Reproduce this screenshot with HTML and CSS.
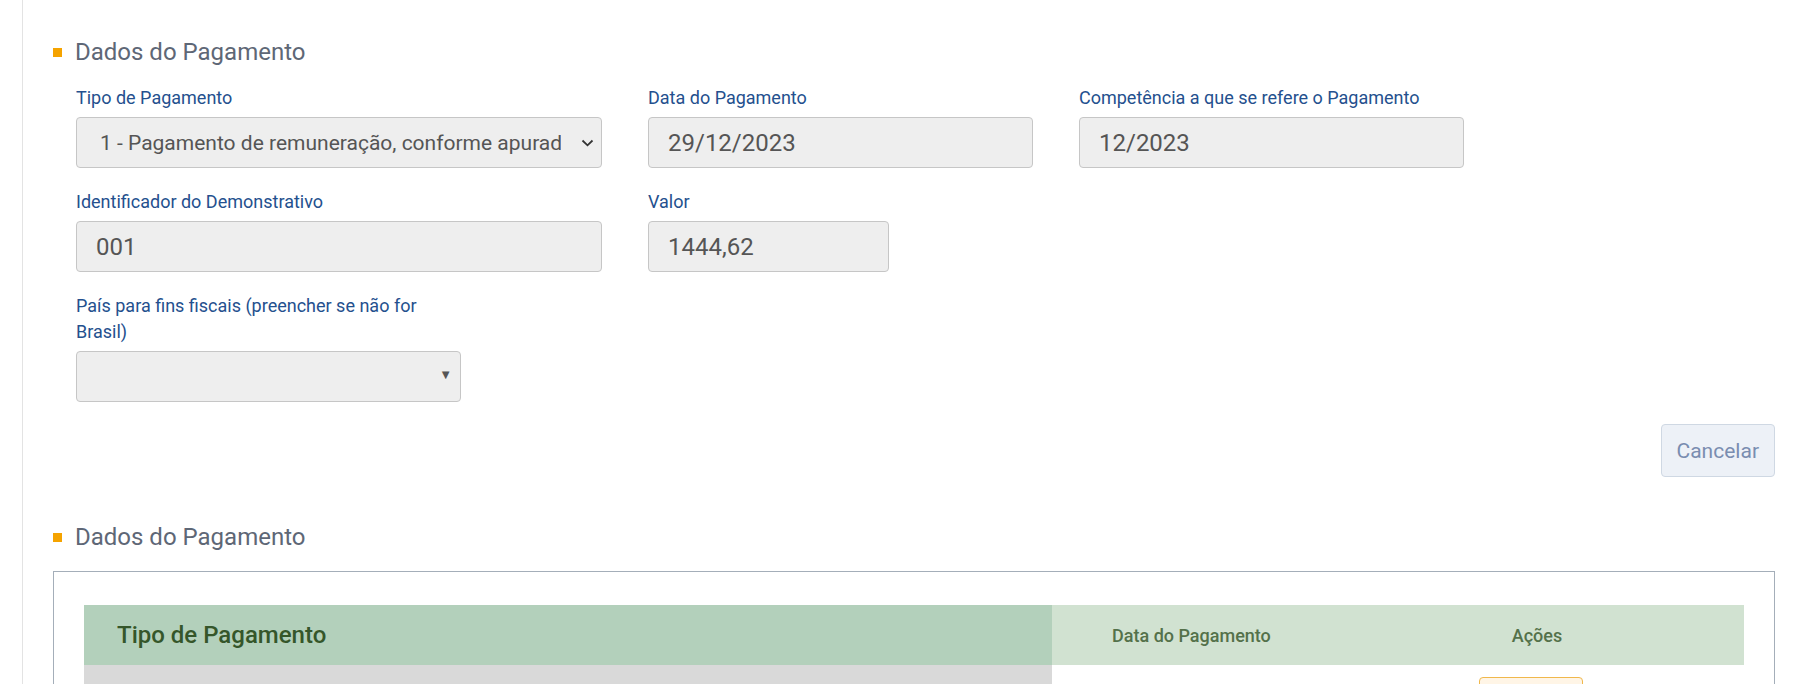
FILE: index.html
```html
<!DOCTYPE html>
<html lang="pt-BR">
<head>
    <meta charset="UTF-8">
    <meta name="viewport" content="width=device-width, initial-scale=1.0">
    <title>Dados do Pagamento</title>
    <link rel="stylesheet" href="styles.css">
</head>
<body>

    <div class="painel">
        <section class="secao">
            <h3 class="secao-titulo">Dados do Pagamento</h3>

            <div class="form-grid">
                <div class="campo campo-largo">
                    <label>Tipo de Pagamento</label>
                    <div class="select-wrap">
                        <select class="entrada" disabled>
                            <option>1 - Pagamento de remuneração, conforme apurado no demonstrativo</option>
                        </select>
                        <svg class="seta-chevron" width="13" height="8" viewBox="0 0 13 8">
                            <path d="M1.5 1.5 L6.5 6.3 L11.5 1.5" fill="none" stroke="#333" stroke-width="1.8"/>
                        </svg>
                    </div>
                </div>

                <div class="campo">
                    <label>Data do Pagamento</label>
                    <input class="entrada" type="text" value="29/12/2023" disabled>
                </div>

                <div class="campo">
                    <label>Competência a que se refere o Pagamento</label>
                    <input class="entrada" type="text" value="12/2023" disabled>
                </div>

                <div class="campo campo-largo">
                    <label>Identificador do Demonstrativo</label>
                    <input class="entrada" type="text" value="001" disabled>
                </div>

                <div class="campo campo-curto">
                    <label>Valor</label>
                    <input class="entrada" type="text" value="1444,62" disabled>
                </div>

                <div class="campo campo-pais">
                    <label>País para fins fiscais (preencher se não for Brasil)</label>
                    <div class="select-wrap">
                        <select class="entrada entrada-pais" disabled>
                            <option></option>
                        </select>
                        <span class="seta-triangulo">&#9660;</span>
                    </div>
                </div>
            </div>

            <div class="acoes">
                <button class="btn-cancelar" type="button">Cancelar</button>
            </div>
        </section>

        <section class="secao">
            <h3 class="secao-titulo">Dados do Pagamento</h3>

            <div class="tabela-box">
                <table class="tabela">
                    <thead>
                        <tr>
                            <th class="col-tipo">Tipo de Pagamento</th>
                            <th class="col-data">Data do Pagamento</th>
                            <th class="col-acoes">Ações</th>
                        </tr>
                    </thead>
                    <tbody>
                        <tr>
                            <td class="col-tipo"></td>
                            <td class="col-data"></td>
                            <td class="col-acoes"><button class="btn-editar" type="button">Editar</button></td>
                        </tr>
                    </tbody>
                </table>
            </div>
        </section>
    </div>

</body>
</html>
```

FILE: styles.css
```css
/* Base */
body {
    font-family: 'Roboto', 'Liberation Sans', sans-serif;
    background-color: #ffffff;
    color: #555555;
    margin: 0;
    padding: 0;
    overflow: hidden;
}

.painel {
    margin-left: 22px;
    border-left: 1px solid #e3e3e3;
    padding: 37px 26px 40px 30px;
    min-height: 700px;
}

/* Section titles */
.secao-titulo {
    margin: 0;
    font-size: 24px;
    line-height: 30px;
    font-weight: 400;
    color: #5e6776;
    display: flex;
    align-items: center;
}

.secao-titulo::before {
    content: "";
    width: 9px;
    height: 9px;
    background-color: #f5a300;
    margin-right: 13px;
}

.secao + .secao {
    margin-top: 45px;
}

/* Form */
.form-grid {
    display: grid;
    grid-template-columns: 526px 385px 385px;
    column-gap: 46px;
    row-gap: 21px;
    margin: 18px 0 0 23px;
    align-items: end;
}

.campo {
    display: flex;
    flex-direction: column;
}

.campo-largo {
    grid-column: 1;
}

.campo-curto {
    width: 241px;
}

.campo-pais {
    grid-column: 1;
    width: 385px;
}

.campo label {
    color: #24508e;
    font-size: 18px;
    line-height: 26px;
    margin-bottom: 6px;
}

.entrada {
    box-sizing: border-box;
    height: 51px;
    width: 100%;
    padding: 0 19px;
    border: 1px solid #c6c6c6;
    border-radius: 4px;
    background-color: #eeeeee;
    color: #555555;
    font-family: inherit;
    font-size: 24px;
    opacity: 1;
    outline: none;
}

.select-wrap {
    position: relative;
}

select.entrada {
    appearance: none;
    -webkit-appearance: none;
    padding: 0 40px 0 23px;
    font-size: 21px;
}

.seta-chevron {
    position: absolute;
    right: 8px;
    top: 22px;
}

.seta-triangulo {
    position: absolute;
    right: 9px;
    top: 16px;
    font-size: 13px;
    color: #555555;
}

/* Buttons */
.acoes {
    display: flex;
    justify-content: flex-end;
    margin-top: 22px;
}

.btn-cancelar {
    background-color: #edf1f7;
    color: #7a8db0;
    border: 1px solid #cfd8e3;
    border-radius: 4px;
    height: 53px;
    padding: 0 15px;
    font-family: 'Roboto', sans-serif;
    font-size: 21px;
    cursor: pointer;
}

/* Table */
.tabela-box {
    margin-top: 19px;
    border: 1px solid #a4aeb9;
    padding: 33px 30px 30px 30px;
}

.tabela {
    width: 100%;
    border-collapse: collapse;
    table-layout: fixed;
}

.tabela th {
    height: 60px;
    padding: 0;
    text-align: left;
    font-weight: 500;
    background-color: #d1e2d1;
    color: #54714a;
    font-size: 18px;
    box-sizing: border-box;
}

.tabela .col-tipo {
    width: 968px;
}

.tabela th.col-tipo {
    background-color: #b3d0bb;
    color: #35562a;
    font-size: 24px;
    padding-left: 33px;
}

.tabela .col-data {
    width: 278px;
}

.tabela th.col-data {
    padding-left: 60px;
}

.tabela th.col-acoes,
.tabela td.col-acoes {
    text-align: center;
}

.tabela td {
    height: 60px;
    padding: 0;
    vertical-align: top;
}

.tabela td.col-tipo {
    background-color: #d9d9d9;
}

.btn-editar {
    margin-top: 12px;
    margin-right: 12px;
    width: 104px;
    height: 40px;
    padding: 12px 0 0 0;
    background-color: #fff5e6;
    border: 1px solid #f0b84c;
    border-radius: 4px;
    color: #c98a18;
    font-family: 'Roboto', sans-serif;
    font-size: 16px;
}
```
